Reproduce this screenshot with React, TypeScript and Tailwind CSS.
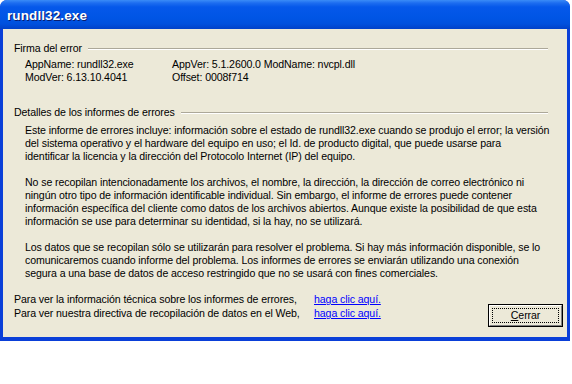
import React from "react";

const font = { fontFamily: '"Liberation Sans", Arial, sans-serif' };

function GroupHeader({ title }: { title: string }) {
  return (
    <div className="flex items-center h-[13px] pl-[11px] pr-[19px]">
      <span className="whitespace-nowrap">{title}</span>
      <div className="flex-1 ml-[6px] flex flex-col">
        <div className="h-px bg-[#aca899]" />
        <div className="h-px bg-white" />
      </div>
    </div>
  );
}

export default function App() {
  return (
    <div className="w-[572px] h-[384px] bg-white overflow-hidden text-[10.6px] tracking-[-0.1px] leading-[13px] text-black" style={font}>
      <div className="w-[570px] h-[341px] flex flex-col rounded-t-[7px] bg-[#0a3fd8] overflow-hidden">
        <div className="h-[29px] shrink-0 flex items-center pl-[7px] pt-[3px] bg-[linear-gradient(to_bottom,#3a8cf7_0px,#1d6df0_3px,#0558ea_7px,#0055e5_18px,#0050dd_24px,#0141c8_29px)]">
          <span className="text-white font-bold text-[13.5px] tracking-[0.1px] leading-[16px] [text-shadow:1px_1px_0_#0a1c6e]">rundll32.exe</span>
        </div>
        <div className="flex-1 mx-[3px] mb-[4px] bg-[#ece9d8] flex flex-col pt-[13px]">
          <GroupHeader title="Firma del error" />
          <div className="flex pl-[22px] mt-[3px]">
            <div className="w-[147px] flex flex-col">
              <span className="whitespace-nowrap">AppName: rundll32.exe</span>
              <span className="whitespace-nowrap">ModVer: 6.13.10.4041</span>
            </div>
            <div className="flex flex-col">
              <span className="whitespace-nowrap">AppVer: 5.1.2600.0 ModName: nvcpl.dll</span>
              <span className="whitespace-nowrap">Offset: 0008f714</span>
            </div>
          </div>
          <div className="mt-[22px]">
            <GroupHeader title="Detalles de los informes de errores" />
          </div>
          <div className="pl-[22px] mt-[5px] flex flex-col gap-[13px] whitespace-nowrap">
            <p>
              Este informe de errores incluye: información sobre el estado de rundll32.exe cuando se produjo el error; la versión
              <br />
              del sistema operativo y el hardware del equipo en uso; el Id. de producto digital, que puede usarse para
              <br />
              identificar la licencia y la dirección del Protocolo Internet (IP) del equipo.
            </p>
            <p>
              No se recopilan intencionadamente los archivos, el nombre, la dirección, la dirección de correo electrónico ni
              <br />
              ningún otro tipo de información identificable individual. Sin embargo, el informe de errores puede contener
              <br />
              información específica del cliente como datos de los archivos abiertos. Aunque existe la posibilidad de que esta
              <br />
              información se use para determinar su identidad, si la hay, no se utilizará.
            </p>
            <p>
              Los datos que se recopilan sólo se utilizarán para resolver el problema. Si hay más información disponible, se lo
              <br />
              comunicaremos cuando informe del problema. Los informes de errores se enviarán utilizando una conexión
              <br />
              segura a una base de datos de acceso restringido que no se usará con fines comerciales.
            </p>
          </div>
          <div className="flex pl-[11px] mt-[13px]">
            <div className="flex flex-col w-[300px] whitespace-nowrap">
              <span className="h-[14px]">Para ver la información técnica sobre los informes de errores,</span>
              <span className="h-[14px]">Para ver nuestra directiva de recopilación de datos en el Web,</span>
            </div>
            <div className="flex flex-col whitespace-nowrap">
              <span className="h-[14px] text-[#0000ff] underline">haga clic aquí.</span>
              <span className="h-[14px] text-[#0000ff] underline">haga clic aquí.</span>
            </div>
            <div className="flex-1" />
            <div className="mt-[11px] mr-[4px] w-[75px] h-[23px] border border-black bg-[#ece9d8]">
              <div className="w-full h-full border-t border-l border-white border-r border-b border-r-[#808080] border-b-[#808080] p-[2px]">
                <div className="w-full h-full border border-dotted border-black flex items-center justify-center">
                  <span><span className="underline">C</span>errar</span>
                </div>
              </div>
            </div>
          </div>
        </div>
      </div>
    </div>
  );
}
